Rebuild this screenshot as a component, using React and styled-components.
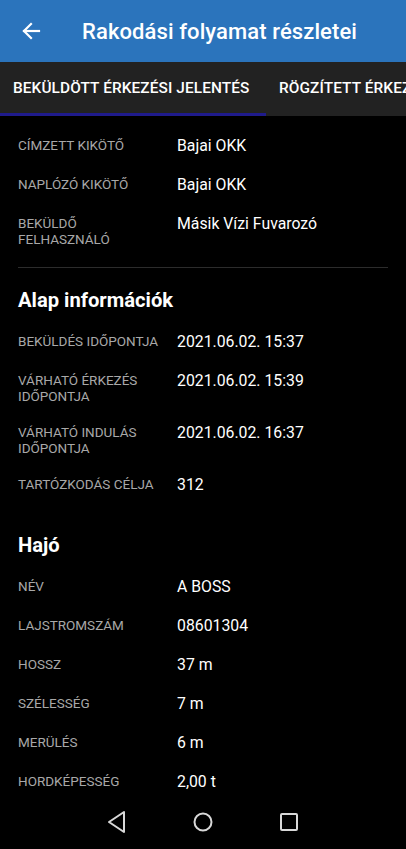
import React from "react";
import styled, { createGlobalStyle } from "styled-components";

const GlobalStyle = createGlobalStyle`
  html, body {
    margin: 0;
    padding: 0;
    background: #000;
  }
  body {
    font-family: Roboto, "Noto Sans", sans-serif;
  }
`;

const Screen = styled.div`
  width: 406px;
  height: 849px;
  display: flex;
  flex-direction: column;
  background: #000;
  overflow: hidden;
`;

const AppBar = styled.header`
  height: 62px;
  flex-shrink: 0;
  display: flex;
  align-items: center;
  background: #2b74bc;
  color: #fff;
`;

const BackButton = styled.div`
  width: 62px;
  height: 62px;
  display: flex;
  align-items: center;
  justify-content: center;
`;

const Title = styled.h1`
  margin: 0 0 0 20px;
  font-size: 22px;
  font-weight: 500;
  letter-spacing: 0.1px;
`;

const TabBar = styled.nav`
  height: 54px;
  flex-shrink: 0;
  display: flex;
  background: #222;
  overflow: hidden;
  white-space: nowrap;
`;

const Tab = styled.div`
  flex-shrink: 0;
  display: flex;
  align-items: center;
  padding: 0 13px;
  color: #fff;
  font-size: 15.4px;
  font-weight: 500;
  letter-spacing: 0.1px;
  border-bottom: 3px solid ${(p) => (p.$active ? "#1f1b8c" : "transparent")};
  box-sizing: border-box;
  min-width: ${(p) => (p.$active ? "266px" : "auto")};
`;

const Content = styled.main`
  flex: 1;
  overflow: hidden;
  padding: 10px 18px 0 18px;
`;

const Row = styled.div`
  display: flex;
  align-items: flex-start;
  padding: 10px 0 9px;
`;

const Label = styled.div`
  width: 148px;
  margin-right: 11px;
  flex-shrink: 0;
  color: #a8a8a8;
  font-size: 13.5px;
  line-height: 16px;
  text-transform: uppercase;
  padding-top: 1px;
`;

const Value = styled.div`
  color: #fff;
  font-size: 15.8px;
  line-height: 20px;
`;

const Divider = styled.hr`
  border: none;
  height: 1px;
  background: #2c2c2c;
  margin: 11px 0 20px;
`;

const Heading = styled.h2`
  margin: ${(p) => (p.$spaced ? "29px" : "0")} 0 10px;
  color: #fff;
  font-size: 20.2px;
  line-height: 24px;
  font-weight: 700;
`;

const NavBar = styled.footer`
  height: 54px;
  flex-shrink: 0;
  display: flex;
  align-items: center;
  justify-content: center;
  gap: 58px;
  background: #000;
`;

const NavIcon = styled.div`
  width: 28px;
  height: 28px;
  display: flex;
  align-items: center;
  justify-content: center;
`;

const sender = [
  ["Címzett kikötő", "Bajai OKK"],
  ["Naplózó kikötő", "Bajai OKK"],
  ["Beküldő felhasználó", "Másik Vízi Fuvarozó"],
];

const basics = [
  ["Beküldés időpontja", "2021.06.02. 15:37"],
  ["Várható érkezés időpontja", "2021.06.02. 15:39"],
  ["Várható indulás időpontja", "2021.06.02. 16:37"],
  ["Tartózkodás célja", "312"],
];

const ship = [
  ["Név", "A BOSS"],
  ["Lajstromszám", "08601304"],
  ["Hossz", "37 m"],
  ["Szélesség", "7 m"],
  ["Merülés", "6 m"],
  ["Hordképesség", "2,00 t"],
];

function Rows({ items }) {
  return items.map(([label, value]) => (
    <Row key={label}>
      <Label>{label}</Label>
      <Value>{value}</Value>
    </Row>
  ));
}

export default function App() {
  return (
    <>
      <GlobalStyle />
      <Screen>
        <AppBar>
          <BackButton>
            <svg width="20" height="20" viewBox="0 0 20 20" fill="none" stroke="#fff" strokeWidth="2.2" strokeLinecap="square">
              <path d="M18 10H3" />
              <path d="M10 3L3 10l7 7" />
            </svg>
          </BackButton>
          <Title>Rakodási folyamat részletei</Title>
        </AppBar>

        <TabBar>
          <Tab $active>BEKÜLDÖTT ÉRKEZÉSI JELENTÉS</Tab>
          <Tab>RÖGZÍTETT ÉRKEZÉSI JELENTÉS</Tab>
        </TabBar>

        <Content>
          <Rows items={sender} />
          <Divider />
          <Heading>Alap információk</Heading>
          <Rows items={basics} />
          <Heading $spaced>Hajó</Heading>
          <Rows items={ship} />
        </Content>

        <NavBar>
          <NavIcon>
            <svg width="20" height="24" viewBox="0 0 20 24" fill="none" stroke="#d8d8d8" strokeWidth="2" strokeLinejoin="round">
              <path d="M17 2L2 12l15 10z" />
            </svg>
          </NavIcon>
          <NavIcon>
            <svg width="22" height="22" viewBox="0 0 22 22" fill="none" stroke="#d8d8d8" strokeWidth="2">
              <circle cx="11" cy="11" r="8.5" />
            </svg>
          </NavIcon>
          <NavIcon>
            <svg width="20" height="20" viewBox="0 0 20 20" fill="none" stroke="#d8d8d8" strokeWidth="2">
              <rect x="2" y="2" width="16" height="16" rx="1" />
            </svg>
          </NavIcon>
        </NavBar>
      </Screen>
    </>
  );
}
